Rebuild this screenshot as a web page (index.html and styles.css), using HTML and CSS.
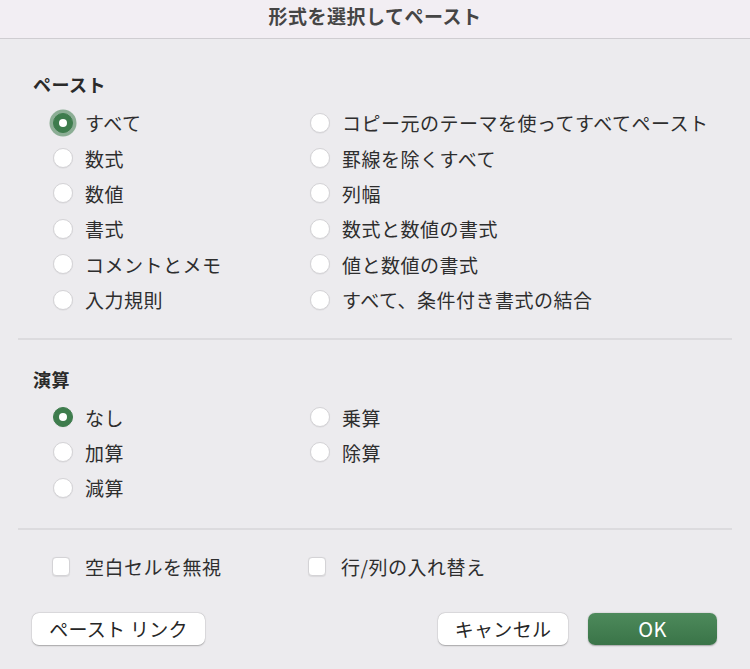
FILE: index.html
```html
<!DOCTYPE html>
<html lang="ja">
<head>
<meta charset="utf-8">
<link rel="stylesheet" href="styles.css">
</head>
<body>
<div class="dialog">
  <div class="titlebar">形式を選択してペースト</div>
  <div class="content">
    <section class="section paste">
      <h2 class="heading">ペースト</h2>
      <div class="grid">
        <div class="col">
          <label class="opt"><span class="radio on"></span>すべて</label>
          <label class="opt"><span class="radio"></span>数式</label>
          <label class="opt"><span class="radio"></span>数値</label>
          <label class="opt"><span class="radio"></span>書式</label>
          <label class="opt"><span class="radio"></span>コメントとメモ</label>
          <label class="opt"><span class="radio"></span>入力規則</label>
        </div>
        <div class="col">
          <label class="opt"><span class="radio"></span>コピー元のテーマを使ってすべてペースト</label>
          <label class="opt"><span class="radio"></span>罫線を除くすべて</label>
          <label class="opt"><span class="radio"></span>列幅</label>
          <label class="opt"><span class="radio"></span>数式と数値の書式</label>
          <label class="opt"><span class="radio"></span>値と数値の書式</label>
          <label class="opt"><span class="radio"></span>すべて、条件付き書式の結合</label>
        </div>
      </div>
    </section>
    <hr class="divider">
    <section class="section calc">
      <h2 class="heading">演算</h2>
      <div class="grid">
        <div class="col">
          <label class="opt"><span class="radio on"></span>なし</label>
          <label class="opt"><span class="radio"></span>加算</label>
          <label class="opt"><span class="radio"></span>減算</label>
        </div>
        <div class="col">
          <label class="opt"><span class="radio"></span>乗算</label>
          <label class="opt"><span class="radio"></span>除算</label>
        </div>
      </div>
    </section>
    <hr class="divider">
    <div class="checks">
      <label class="chk"><span class="box"></span>空白セルを無視</label>
      <label class="chk"><span class="box"></span>行/列の入れ替え</label>
    </div>
    <div class="buttons">
      <button class="btn link">ペースト リンク</button>
      <div class="right">
        <button class="btn cancel">キャンセル</button>
        <button class="btn ok">OK</button>
      </div>
    </div>
  </div>
</div>
</body>
</html>
```

FILE: styles.css
```css
* { box-sizing: border-box; }
html, body {
  margin: 0;
  padding: 0;
  width: 750px;
  height: 669px;
  overflow: hidden;
  background: #ecebee;
  font-family: "Noto Sans CJK JP", "Noto Sans", sans-serif;
  color: #2e2e2e;
}
.dialog {
  width: 750px;
  height: 669px;
  display: flex;
  flex-direction: column;
}
.titlebar {
  height: 39px;
  background: #f2eef3;
  border-bottom: 1px solid #cfcdd1;
  text-align: center;
  font-size: 19px;
  font-weight: 700;
  line-height: 32px;
  letter-spacing: 0.5px;
  color: #454545;
}
.content {
  padding: 0 18px;
  display: flex;
  flex-direction: column;
}
.section.paste { padding-top: 34px; }
.section.calc { padding-top: 28px; }
.heading {
  margin: 0 0 0 15px;
  font-size: 18px;
  font-weight: 700;
  line-height: 22px;
  letter-spacing: 0.5px;
  color: #2a2a2a;
}
.paste .heading { margin-bottom: 10px; }
.calc .heading { margin-bottom: 9px; }
.grid {
  display: grid;
  grid-template-columns: 257px 1fr;
  padding-left: 35px;
}
.col { display: flex; flex-direction: column; }
.opt {
  display: flex;
  align-items: center;
  height: 35.4px;
  font-size: 19px;
  line-height: 1;
  letter-spacing: 0.5px;
}
.radio {
  width: 20px;
  height: 20px;
  border-radius: 50%;
  background: #fff;
  border: 1px solid #d4d3d6;
  box-shadow: 0 0.5px 1px rgba(0,0,0,0.08);
  margin-right: 12px;
  flex: none;
  position: relative;
}
.radio.on {
  background: #3e7c4d;
  border-color: #3e7c4d;
}
.radio.on::after {
  content: "";
  position: absolute;
  left: 5px;
  top: 5px;
  width: 8px;
  height: 8px;
  border-radius: 50%;
  background: #fff;
}
.paste .radio.on {
  box-shadow: 0 0 0 3.5px rgba(62,124,77,0.55);
}
.divider {
  margin: 0;
  border: 0;
  border-top: 2px solid #dcdbde;
}
.paste + .divider { margin-top: 21px; }
.calc + .divider { margin-top: 22px; }
.checks {
  display: grid;
  grid-template-columns: 256px 1fr;
  padding-left: 34px;
  margin-top: 27px;
}
.chk {
  display: flex;
  align-items: center;
  height: 20px;
  font-size: 19px;
  line-height: 1;
  letter-spacing: 0.5px;
}
.box {
  width: 18px;
  height: 19px;
  border-radius: 4px;
  background: #fff;
  border: 1px solid #d4d3d6;
  box-shadow: 0 0.5px 1px rgba(0,0,0,0.08);
  margin-right: 15px;
  flex: none;
}
.buttons {
  display: flex;
  justify-content: space-between;
  margin-top: 36px;
  padding: 0 15px 0 14px;
}
.right { display: flex; gap: 20px; }
.btn {
  height: 32px;
  border: 0;
  border-radius: 7px;
  font-family: inherit;
  font-size: 19px;
  line-height: 32px;
  letter-spacing: 0.3px;
  padding: 0;
  color: #262626;
  background: #fff;
  box-shadow: 0 0.5px 1.5px rgba(0,0,0,0.28), 0 0 0 0.5px rgba(0,0,0,0.06);
}
.btn.link { width: 173px; }
.btn.cancel { width: 130px; }
.btn.ok {
  width: 129px;
  color: #fff;
  font-size: 20px;
  background: linear-gradient(#4d8a5b, #3a7448);
  box-shadow: 0 0.5px 1.5px rgba(0,0,0,0.3);
}
```
